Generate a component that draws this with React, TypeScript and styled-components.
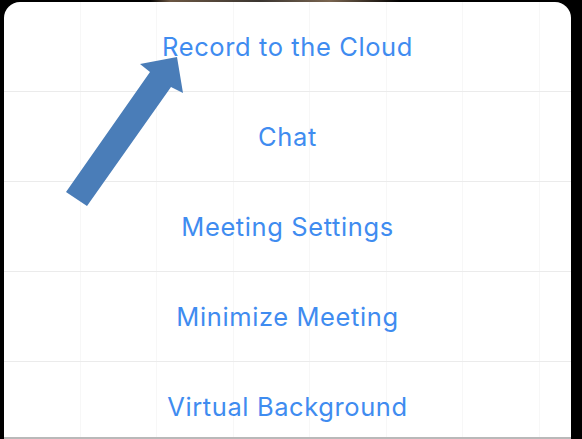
import React from "react";
import styled, { createGlobalStyle } from "styled-components";

const GlobalStyle = createGlobalStyle`
  html, body {
    margin: 0;
    padding: 0;
    background: #000;
  }
`;

const Page = styled.div`
  position: relative;
  width: 582px;
  height: 439px;
  background: #000;
  overflow: hidden;
  display: flex;
  flex-direction: column;
`;

const TopStrip = styled.div`
  height: 2px;
  flex-shrink: 0;
  background: linear-gradient(
    to right,
    #000 0,
    #000 150px,
    #6b5642 170px,
    #3a3530 260px,
    #7a6550 330px,
    #000 400px,
    #000 100%
  );
`;

const Sheet = styled.div`
  margin: 0 11px 0 4px;
  height: 435px;
  background-color: #fff;
  background-image: repeating-linear-gradient(
    to right,
    transparent 0,
    transparent 75.5px,
    #f7f7f7 75.5px,
    #f7f7f7 76.5px
  );
  border-radius: 16px 16px 0 0;
  overflow: hidden;
  display: flex;
  flex-direction: column;
  border-bottom: 2px solid #b9b9b9;
`;

const Row = styled.div<{ $last?: boolean }>`
  height: 89px;
  flex-shrink: 0;
  display: flex;
  align-items: center;
  justify-content: center;
  border-bottom: ${(p) => (p.$last ? "none" : "1px solid #ebebeb")};
  font-family: Inter, "Liberation Sans", sans-serif;
  font-size: 25.5px;
  color: #3f8cf0;
  letter-spacing: 0.6px;
`;

const Arrow = styled.svg`
  position: absolute;
  left: 0;
  top: 0;
  pointer-events: none;
`;

const items = [
  "Record to the Cloud",
  "Chat",
  "Meeting Settings",
  "Minimize Meeting",
  "Virtual Background",
];

const App: React.FC = () => {
  return (
    <Page>
      <GlobalStyle />
      <TopStrip />
      <Sheet>
        {items.map((label, i) => (
          <Row key={label} $last={i === items.length - 1}>
            {label}
          </Row>
        ))}
      </Sheet>
      <Arrow width="582" height="439" viewBox="0 0 582 439">
        <polygon
          points="66,192 150,72 140,64 177,57 183,93 171,87 87,206"
          fill="#4a7db8"
        />
      </Arrow>
    </Page>
  );
};

export default App;
